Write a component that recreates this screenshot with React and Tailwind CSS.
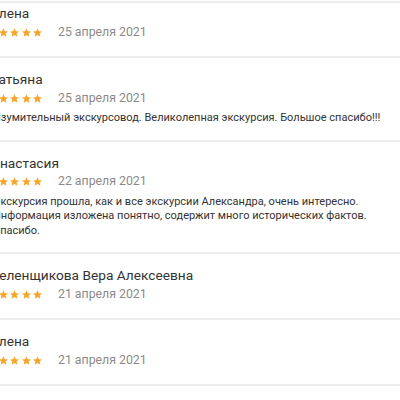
import React from "react";

const reviews = [
  { name: "Елена", date: "25 апреля 2021", text: null, first: true },
  {
    name: "Татьяна",
    date: "25 апреля 2021",
    text: "Изумительный экскурсовод. Великолепная экскурсия. Большое спасибо!!!",
  },
  {
    name: "Анастасия",
    date: "22 апреля 2021",
    text: "Экскурсия прошла, как и все экскурсии Александра, очень интересно. Информация изложена понятно, содержит много исторических фактов. Спасибо.",
  },
  { name: "Зеленщикова Вера Алексеевна", date: "21 апреля 2021", text: null },
  { name: "Елена", date: "21 апреля 2021", text: null },
];

const Star = () => (
  <svg width="11" height="11" viewBox="0 0 24 24" className="shrink-0">
    <path
      d="M12 2.5l2.9 6.6 7.1.6-5.4 4.7 1.6 7-6.2-3.7-6.2 3.7 1.6-7L2 9.7l7.1-.6z"
      fill="#f4a62a"
    />
  </svg>
);

const Review = ({ review }) => (
  <div className={`border-b-2 border-[#ededed] ${review.text ? "pb-[14px]" : "pb-[15px]"} ${review.first ? "pt-0" : "pt-[11px]"}`}>
    <div className="-ml-[9px] pr-[6px]">
      <div className="text-[13.7px] leading-[20px] text-[#333]">{review.name}</div>
      <div className="flex items-center h-[18px]">
        <div className="flex gap-[0.5px] -ml-[5px]">
          <Star />
          <Star />
          <Star />
          <Star />
          <Star />
        </div>
        <span className="ml-[15px] text-[12.3px] text-[#8a8a8a]">{review.date}</span>
      </div>
      {review.text && (
        <p className="mt-[4px] ml-[2px] text-[11px] leading-[14.5px] text-[#333]">{review.text}</p>
      )}
    </div>
  </div>
);

export default function App() {
  return (
    <div className="w-[400px] h-[400px] overflow-hidden bg-white" style={{ fontFamily: "Roboto, 'Noto Sans', sans-serif" }}>
      <div className="mt-[1px] border-t-2 border-[#ededed]">
        {reviews.map((r, i) => (
          <Review key={i} review={r} />
        ))}
      </div>
    </div>
  );
}
